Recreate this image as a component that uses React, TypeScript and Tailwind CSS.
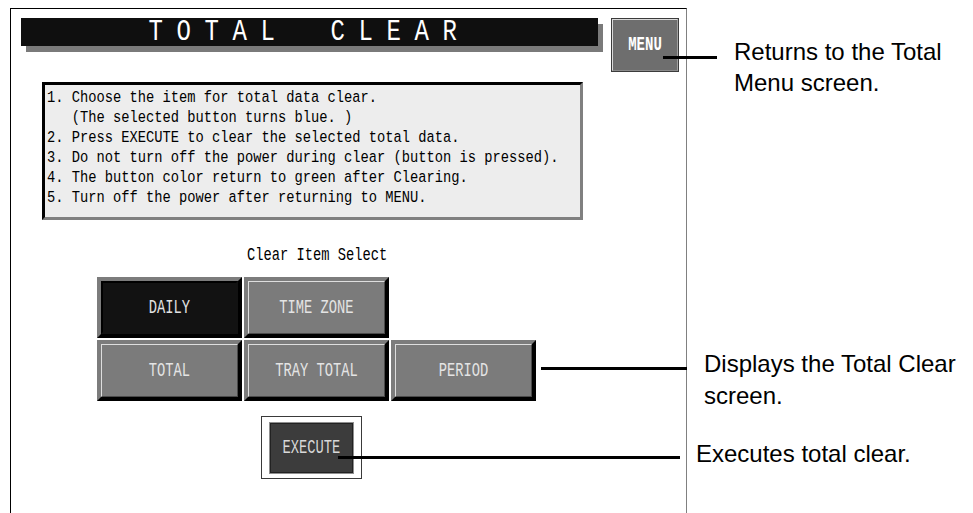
import React from "react"

const STEPS = [
    "1. Choose the item for total data clear.",
    "   (The selected button turns blue. )",
    "2. Press EXECUTE to clear the selected total data.",
    "3. Do not turn off the power during clear (button is pressed).",
    "4. The button color return to green after Clearing.",
    "5. Turn off the power after returning to MENU.",
]

function ItemButton({ label, selected }: { label: string; selected?: boolean }) {
    return (
        <div className="w-[145px] h-[61px] border-4 border-t-[#7c7c7c] border-l-[#7c7c7c] border-r-black border-b-black">
            {selected ? (
                <div className="h-full flex items-center justify-center bg-[#121212] border-2 border-t-black border-l-black border-r-[#121212] border-b-[#121212]">
                    <span className="block scale-y-150 text-[13.75px] leading-none text-[#e2e2e2]">{label}</span>
                </div>
            ) : (
                <div className="h-full flex items-center justify-center bg-[#7b7b7b] border border-t-[#dedede] border-l-[#dedede] border-r-[#4a4a4a] border-b-[#4a4a4a]">
                    <span className="block scale-y-150 text-[13.75px] leading-none text-[#e4e4e4] whitespace-pre">{label}</span>
                </div>
            )}
        </div>
    )
}

export default function App() {
    return (
        <div className="relative w-[973px] h-[513px] bg-white overflow-hidden flex items-start">
            {/* device screen */}
            <div className="shrink-0 mt-[8px] ml-[10px] w-[677px] h-[505px] border-t border-l border-r border-t-black border-l-black border-r-[#808080] flex flex-col items-start font-['Liberation_Mono',monospace] text-black">
                <div className="mt-[9px] flex items-start">
                    <div className="ml-[10px] w-[577px] h-[28px] pr-[14px] bg-[#0f0f0f] shadow-[5px_6px_0_#7a7a7a] flex items-center justify-center">
                        <span className="block scale-y-125 text-[24px] leading-none tracking-[-0.4px] text-white whitespace-pre">T O T A L    C L E A R</span>
                    </div>
                    <div className="ml-[13px] w-[68px] h-[54px] border border-[#3c3c3c]">
                        <div className="h-full flex items-center justify-center bg-[#6e6e6e] border border-t-[#d9d9d9] border-l-[#d9d9d9] border-r-[#a0a0a0] border-b-[#8a8a8a]">
                            <span className="block -mt-[2px] scale-y-150 text-[14px] leading-none font-bold text-white">MENU</span>
                        </div>
                    </div>
                </div>

                <div className="mt-[10px] ml-[31px] w-[541px] h-[138px] border-[3px] border-t-black border-l-black border-r-[#808080] border-b-[#808080] bg-[#ededed] pt-[3px] pl-[2px] text-[13.75px] leading-[20px]">
                    {STEPS.map(s => (
                        <div key={s} className="scale-y-125 whitespace-pre">{s}</div>
                    ))}
                </div>

                <div className="mt-[26px] ml-[236px] h-[20px] text-[13.75px] leading-[20px] scale-y-140">Clear Item Select</div>

                <div className="mt-[11px] ml-[86px] flex flex-col gap-[2px]">
                    <div className="flex gap-[2px]">
                        <ItemButton label="DAILY" selected />
                        <ItemButton label="TIME ZONE" />
                    </div>
                    <div className="flex gap-[2px]">
                        <ItemButton label="TOTAL" />
                        <ItemButton label="TRAY TOTAL" />
                        <ItemButton label="PERIOD" />
                    </div>
                </div>

                <div className="mt-[15px] ml-[250px] w-[101px] h-[63px] border border-[#3a3a3a] bg-white pt-[5px] pl-[7px]">
                    <div className="w-[85px] h-[52px] border border-[#8f8f8f]">
                        <div className="h-full flex items-center justify-center bg-[#3c3c3c] border border-[#222]">
                            <span className="block scale-y-150 text-[13.75px] leading-none text-[#d8d8d8]">EXECUTE</span>
                        </div>
                    </div>
                </div>
            </div>

            {/* callouts */}
            <div className="flex flex-col items-start font-['Liberation_Sans',Arial,sans-serif] text-[24px] text-black">
                <p className="mt-[36px] ml-[47px] leading-[31px]">Returns to the Total<br />Menu screen.</p>
                <p className="mt-[250px] ml-[17px] leading-[32px]">Displays the Total Clear<br />screen.</p>
                <p className="mt-[30px] ml-[9px] leading-[24px]">Executes total clear.</p>
            </div>

            {/* leader lines */}
            <div className="absolute left-[663px] top-[56px] w-[54px] h-[3px] bg-black" />
            <div className="absolute left-[541px] top-[367px] w-[146px] h-[3px] bg-black" />
            <div className="absolute left-[338px] top-[456px] w-[342px] h-[3px] bg-black" />
        </div>
    )
}
